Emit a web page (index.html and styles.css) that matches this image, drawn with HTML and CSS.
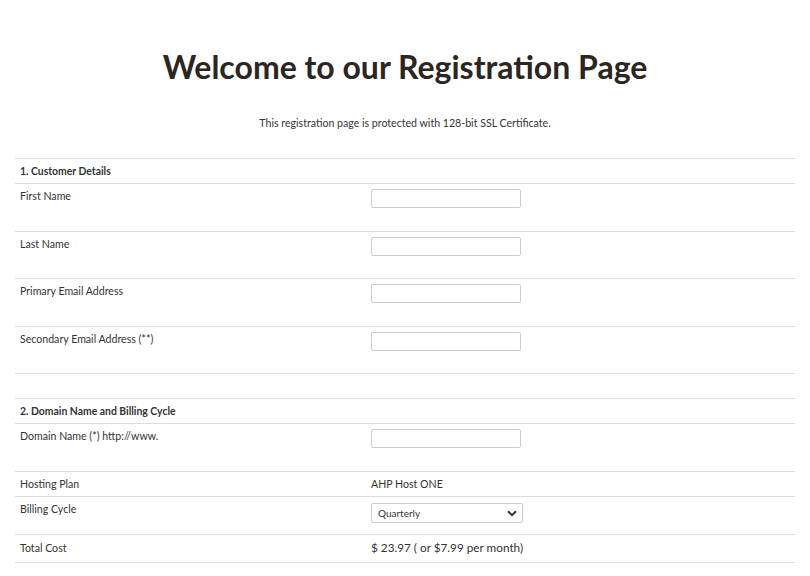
FILE: index.html
```html
<!DOCTYPE html>
<html lang="en">
<head>
    <meta charset="UTF-8">
    <meta name="viewport" content="width=device-width, initial-scale=1.0">
    <title>Registration</title>
    <link rel="stylesheet" href="styles.css">
</head>
<body>

<h1>Welcome to our Registration Page</h1>
<p class="note">This registration page is protected with 128-bit SSL Certificate.</p>

<div class="form">
    <div class="row section">1. Customer Details</div>
    <div class="row field">
        <label for="first">First Name</label>
        <div><input type="text" id="first"></div>
    </div>
    <div class="row field">
        <label for="last">Last Name</label>
        <div><input type="text" id="last"></div>
    </div>
    <div class="row field">
        <label for="email1">Primary Email Address</label>
        <div><input type="text" id="email1"></div>
    </div>
    <div class="row field">
        <label for="email2">Secondary Email Address (**)</label>
        <div><input type="text" id="email2"></div>
    </div>
    <div class="row spacer"></div>
    <div class="row section">2. Domain Name and Billing Cycle</div>
    <div class="row field domain">
        <label for="domain">Domain Name (*) http://www.</label>
        <div><input type="text" id="domain"></div>
    </div>
    <div class="row plain">
        <span>Hosting Plan</span>
        <span>AHP Host ONE</span>
    </div>
    <div class="row billing">
        <label for="cycle">Billing Cycle</label>
        <div class="select-wrap">
            <select id="cycle">
                <option>Quarterly</option>
                <option>Yearly</option>
            </select>
            <svg class="chevron" width="10" height="7" viewBox="0 0 10 7"><path d="M1 1.2 L5 5.2 L9 1.2" fill="none" stroke="#333" stroke-width="2"/></svg>
        </div>
    </div>
    <div class="row total">
        <span>Total Cost</span>
        <span class="cost">$ 23.97 ( or $7.99 per month)</span>
    </div>
</div>

</body>
</html>
```

FILE: styles.css
```css
body {
    font-family: Lato, "Open Sans", sans-serif;
    font-size: 10.6px;
    color: #333;
    margin: 0;
    padding: 0 15px;
    background-color: #fff;
}
h1 {
    font-size: 32px;
    font-weight: bold;
    color: #2b261f;
    text-align: center;
    margin: 46px 0 0;
    line-height: 42px;
}
.note {
    text-align: center;
    margin: 28px 0 0;
    line-height: 14px;
}
.form {
    margin-top: 28px;
    border-top: 1px solid #ddd;
}
.row {
    display: grid;
    grid-template-columns: 351px 1fr;
    border-bottom: 1px solid #ddd;
    box-sizing: border-box;
    padding: 0 5px;
    line-height: 14px;
}
.section {
    display: block;
    font-weight: bold;
    font-size: 10.4px;
    height: 25px;
    padding-top: 5px;
}
.field {
    height: 47.5px;
    padding-top: 5px;
}
.field.domain {
    height: 48px;
}
.spacer {
    height: 25px;
}
.plain {
    height: 25px;
    padding-top: 5px;
}
.billing {
    height: 38px;
    padding-top: 5px;
}
.total {
    height: 28px;
    padding-top: 6px;
}
.cost {
    font-size: 11.75px;
}
input {
    width: 150px;
    height: 19px;
    box-sizing: border-box;
    border: 1px solid #ccc;
    border-radius: 2px;
    margin: 0;
    padding: 2px 5px;
    font-family: inherit;
    font-size: 11px;
}
.select-wrap {
    position: relative;
    width: 152px;
    height: 20px;
    top: 1px;
}
select {
    appearance: none;
    width: 152px;
    height: 20px;
    box-sizing: border-box;
    border: 1px solid #ccc;
    border-radius: 2px;
    background: #fff;
    font-family: inherit;
    font-size: 10px;
    color: #333;
    padding: 0 6px;
    margin: 0;
}
.chevron {
    position: absolute;
    right: 6px;
    top: 7px;
    pointer-events: none;
}
```
